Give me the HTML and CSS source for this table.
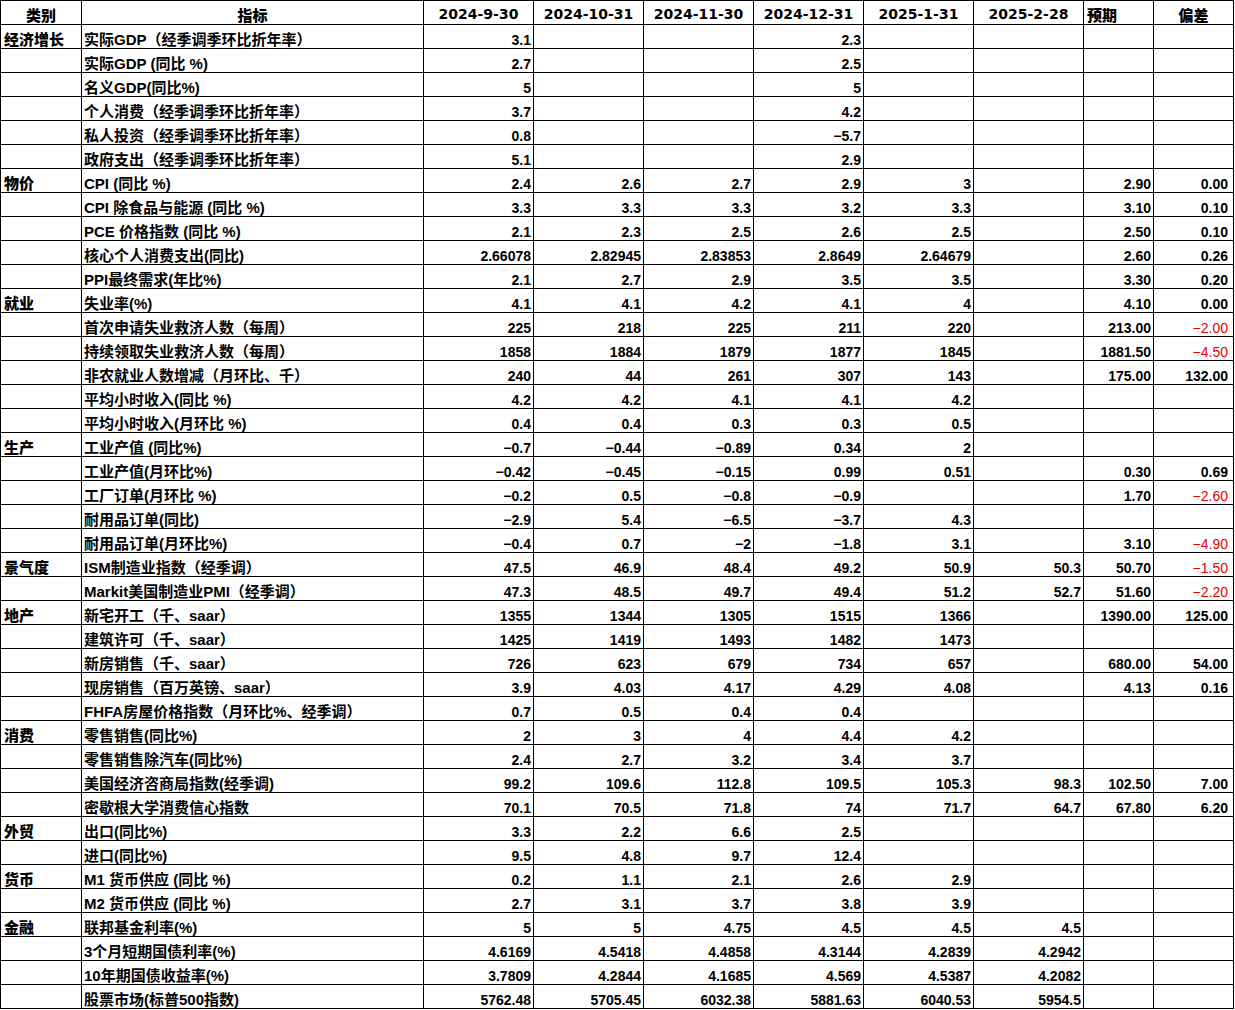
FILE: index.html
```html
<!DOCTYPE html>
<html lang="zh-CN">
<head>
<meta charset="utf-8">
<title>经济数据</title>
<link rel="stylesheet" href="styles.css">
</head>
<body>
<table class="sheet">
  <colgroup>
    <col class="w-cat"><col class="w-name">
    <col class="w-num"><col class="w-num"><col class="w-num"><col class="w-num"><col class="w-num"><col class="w-num">
    <col class="w-exp"><col class="w-dev">
  </colgroup>
  <thead>
    <tr>
      <th class="h-cn">类别</th><th class="h-cn">指标</th>
      <th>2024-9-30</th><th>2024-10-31</th><th>2024-11-30</th><th>2024-12-31</th><th>2025-1-31</th><th>2025-2-28</th>
      <th class="h-cn h-left">预期</th><th class="h-cn">偏差</th>
    </tr>
  </thead>
  <tbody>
    <tr><td class="cat">经济增长</td><td class="name">实际GDP（经季调季环比折年率）</td><td>3.1</td><td></td><td></td><td>2.3</td><td></td><td></td><td></td><td class="dev"></td></tr>
    <tr><td class="cat"></td><td class="name">实际GDP (同比 %)</td><td>2.7</td><td></td><td></td><td>2.5</td><td></td><td></td><td></td><td class="dev"></td></tr>
    <tr><td class="cat"></td><td class="name">名义GDP(同比%)</td><td>5</td><td></td><td></td><td>5</td><td></td><td></td><td></td><td class="dev"></td></tr>
    <tr><td class="cat"></td><td class="name">个人消费（经季调季环比折年率）</td><td>3.7</td><td></td><td></td><td>4.2</td><td></td><td></td><td></td><td class="dev"></td></tr>
    <tr><td class="cat"></td><td class="name">私人投资（经季调季环比折年率）</td><td>0.8</td><td></td><td></td><td>−5.7</td><td></td><td></td><td></td><td class="dev"></td></tr>
    <tr><td class="cat"></td><td class="name">政府支出（经季调季环比折年率）</td><td>5.1</td><td></td><td></td><td>2.9</td><td></td><td></td><td></td><td class="dev"></td></tr>

    <tr><td class="cat">物价</td><td class="name">CPI (同比 %)</td><td>2.4</td><td>2.6</td><td>2.7</td><td>2.9</td><td>3</td><td></td><td>2.90</td><td class="dev">0.00</td></tr>
    <tr><td class="cat"></td><td class="name">CPI 除食品与能源 (同比 %)</td><td>3.3</td><td>3.3</td><td>3.3</td><td>3.2</td><td>3.3</td><td></td><td>3.10</td><td class="dev">0.10</td></tr>
    <tr><td class="cat"></td><td class="name">PCE 价格指数 (同比 %)</td><td>2.1</td><td>2.3</td><td>2.5</td><td>2.6</td><td>2.5</td><td></td><td>2.50</td><td class="dev">0.10</td></tr>
    <tr><td class="cat"></td><td class="name">核心个人消费支出(同比)</td><td>2.66078</td><td>2.82945</td><td>2.83853</td><td>2.8649</td><td>2.64679</td><td></td><td>2.60</td><td class="dev">0.26</td></tr>
    <tr><td class="cat"></td><td class="name">PPI最终需求(年比%)</td><td>2.1</td><td>2.7</td><td>2.9</td><td>3.5</td><td>3.5</td><td></td><td>3.30</td><td class="dev">0.20</td></tr>

    <tr><td class="cat">就业</td><td class="name">失业率(%)</td><td>4.1</td><td>4.1</td><td>4.2</td><td>4.1</td><td>4</td><td></td><td>4.10</td><td class="dev">0.00</td></tr>
    <tr><td class="cat"></td><td class="name">首次申请失业救济人数（每周）</td><td>225</td><td>218</td><td>225</td><td>211</td><td>220</td><td></td><td>213.00</td><td class="dev neg">−2.00</td></tr>
    <tr><td class="cat"></td><td class="name">持续领取失业救济人数（每周）</td><td>1858</td><td>1884</td><td>1879</td><td>1877</td><td>1845</td><td></td><td>1881.50</td><td class="dev neg">−4.50</td></tr>
    <tr><td class="cat"></td><td class="name">非农就业人数增减（月环比、千）</td><td>240</td><td>44</td><td>261</td><td>307</td><td>143</td><td></td><td>175.00</td><td class="dev">132.00</td></tr>
    <tr><td class="cat"></td><td class="name">平均小时收入(同比 %)</td><td>4.2</td><td>4.2</td><td>4.1</td><td>4.1</td><td>4.2</td><td></td><td></td><td class="dev"></td></tr>
    <tr><td class="cat"></td><td class="name">平均小时收入(月环比 %)</td><td>0.4</td><td>0.4</td><td>0.3</td><td>0.3</td><td>0.5</td><td></td><td></td><td class="dev"></td></tr>

    <tr><td class="cat">生产</td><td class="name">工业产值 (同比%)</td><td>−0.7</td><td>−0.44</td><td>−0.89</td><td>0.34</td><td>2</td><td></td><td></td><td class="dev"></td></tr>
    <tr><td class="cat"></td><td class="name">工业产值(月环比%)</td><td>−0.42</td><td>−0.45</td><td>−0.15</td><td>0.99</td><td>0.51</td><td></td><td>0.30</td><td class="dev">0.69</td></tr>
    <tr><td class="cat"></td><td class="name">工厂订单(月环比 %)</td><td>−0.2</td><td>0.5</td><td>−0.8</td><td>−0.9</td><td></td><td></td><td>1.70</td><td class="dev neg">−2.60</td></tr>
    <tr><td class="cat"></td><td class="name">耐用品订单(同比)</td><td>−2.9</td><td>5.4</td><td>−6.5</td><td>−3.7</td><td>4.3</td><td></td><td></td><td class="dev"></td></tr>
    <tr><td class="cat"></td><td class="name">耐用品订单(月环比%)</td><td>−0.4</td><td>0.7</td><td>−2</td><td>−1.8</td><td>3.1</td><td></td><td>3.10</td><td class="dev neg">−4.90</td></tr>

    <tr><td class="cat">景气度</td><td class="name">ISM制造业指数（经季调）</td><td>47.5</td><td>46.9</td><td>48.4</td><td>49.2</td><td>50.9</td><td>50.3</td><td>50.70</td><td class="dev neg">−1.50</td></tr>
    <tr><td class="cat"></td><td class="name">Markit美国制造业PMI（经季调）</td><td>47.3</td><td>48.5</td><td>49.7</td><td>49.4</td><td>51.2</td><td>52.7</td><td>51.60</td><td class="dev neg">−2.20</td></tr>

    <tr><td class="cat">地产</td><td class="name">新宅开工（千、saar）</td><td>1355</td><td>1344</td><td>1305</td><td>1515</td><td>1366</td><td></td><td>1390.00</td><td class="dev">125.00</td></tr>
    <tr><td class="cat"></td><td class="name">建筑许可（千、saar）</td><td>1425</td><td>1419</td><td>1493</td><td>1482</td><td>1473</td><td></td><td></td><td class="dev"></td></tr>
    <tr><td class="cat"></td><td class="name">新房销售（千、saar）</td><td>726</td><td>623</td><td>679</td><td>734</td><td>657</td><td></td><td>680.00</td><td class="dev">54.00</td></tr>
    <tr><td class="cat"></td><td class="name">现房销售（百万英镑、saar）</td><td>3.9</td><td>4.03</td><td>4.17</td><td>4.29</td><td>4.08</td><td></td><td>4.13</td><td class="dev">0.16</td></tr>
    <tr><td class="cat"></td><td class="name">FHFA房屋价格指数（月环比%、经季调）</td><td>0.7</td><td>0.5</td><td>0.4</td><td>0.4</td><td></td><td></td><td></td><td class="dev"></td></tr>

    <tr><td class="cat">消费</td><td class="name">零售销售(同比%)</td><td>2</td><td>3</td><td>4</td><td>4.4</td><td>4.2</td><td></td><td></td><td class="dev"></td></tr>
    <tr><td class="cat"></td><td class="name">零售销售除汽车(同比%)</td><td>2.4</td><td>2.7</td><td>3.2</td><td>3.4</td><td>3.7</td><td></td><td></td><td class="dev"></td></tr>
    <tr><td class="cat"></td><td class="name">美国经济咨商局指数(经季调)</td><td>99.2</td><td>109.6</td><td>112.8</td><td>109.5</td><td>105.3</td><td>98.3</td><td>102.50</td><td class="dev">7.00</td></tr>
    <tr><td class="cat"></td><td class="name">密歇根大学消费信心指数</td><td>70.1</td><td>70.5</td><td>71.8</td><td>74</td><td>71.7</td><td>64.7</td><td>67.80</td><td class="dev">6.20</td></tr>

    <tr><td class="cat">外贸</td><td class="name">出口(同比%)</td><td>3.3</td><td>2.2</td><td>6.6</td><td>2.5</td><td></td><td></td><td></td><td class="dev"></td></tr>
    <tr><td class="cat"></td><td class="name">进口(同比%)</td><td>9.5</td><td>4.8</td><td>9.7</td><td>12.4</td><td></td><td></td><td></td><td class="dev"></td></tr>

    <tr><td class="cat">货币</td><td class="name">M1 货币供应 (同比 %)</td><td>0.2</td><td>1.1</td><td>2.1</td><td>2.6</td><td>2.9</td><td></td><td></td><td class="dev"></td></tr>
    <tr><td class="cat"></td><td class="name">M2 货币供应 (同比 %)</td><td>2.7</td><td>3.1</td><td>3.7</td><td>3.8</td><td>3.9</td><td></td><td></td><td class="dev"></td></tr>

    <tr><td class="cat">金融</td><td class="name">联邦基金利率(%)</td><td>5</td><td>5</td><td>4.75</td><td>4.5</td><td>4.5</td><td>4.5</td><td></td><td class="dev"></td></tr>
    <tr><td class="cat"></td><td class="name">3个月短期国债利率(%)</td><td>4.6169</td><td>4.5418</td><td>4.4858</td><td>4.3144</td><td>4.2839</td><td>4.2942</td><td></td><td class="dev"></td></tr>
    <tr><td class="cat"></td><td class="name">10年期国债收益率(%)</td><td>3.7809</td><td>4.2844</td><td>4.1685</td><td>4.569</td><td>4.5387</td><td>4.2082</td><td></td><td class="dev"></td></tr>
    <tr><td class="cat"></td><td class="name">股票市场(标普500指数)</td><td>5762.48</td><td>5705.45</td><td>6032.38</td><td>5881.63</td><td>6040.53</td><td>5954.5</td><td></td><td class="dev"></td></tr>
  </tbody>
</table>
</body>
</html>
```
FILE: styles.css
```css
html, body {
  margin: 0;
  padding: 0;
  background: #ffffff;
}

body {
  font-family: "Liberation Sans", "Noto Sans CJK SC", sans-serif;
  color: #000000;
}

.sheet {
  border-collapse: collapse;
  table-layout: fixed;
  width: 1233px;
}

.w-cat { width: 81px; }
.w-name { width: 342px; }
.w-num { width: 110px; }
.w-exp { width: 70px; }
.w-dev { width: 80px; }

.sheet th,
.sheet td {
  border: 1px solid #000000;
  height: 24px;
  box-sizing: border-box;
  padding: 0 2px 0 2px;
  vertical-align: bottom;
  white-space: nowrap;
  line-height: 15px;
  font-weight: bold;
  font-size: 14px;
  text-align: right;
}

.sheet th {
  font-family: "DejaVu Sans", "Noto Sans CJK SC", sans-serif;
  font-size: 14px;
  text-align: center;
  padding-bottom: 2px;
}

.sheet th.h-cn {
  font-family: "Noto Sans CJK SC", sans-serif;
  font-size: 15px;
  font-weight: 900;
  line-height: 18px;
  padding-bottom: 0;
}

.sheet th.h-left {
  text-align: left;
  padding-left: 3px;
}

.sheet td.cat {
  text-align: left;
  font-family: "Noto Sans CJK SC", sans-serif;
  font-size: 15px;
  font-weight: 900;
  line-height: 18px;
  padding-left: 3px;
}

.sheet td.name {
  text-align: left;
  font-size: 15px;
  padding-left: 2px;
  padding-bottom: 1px;
}

.sheet td.dev {
  padding-right: 5px;
}

.sheet td.neg {
  color: #e00000;
  font-weight: normal;
}
```
